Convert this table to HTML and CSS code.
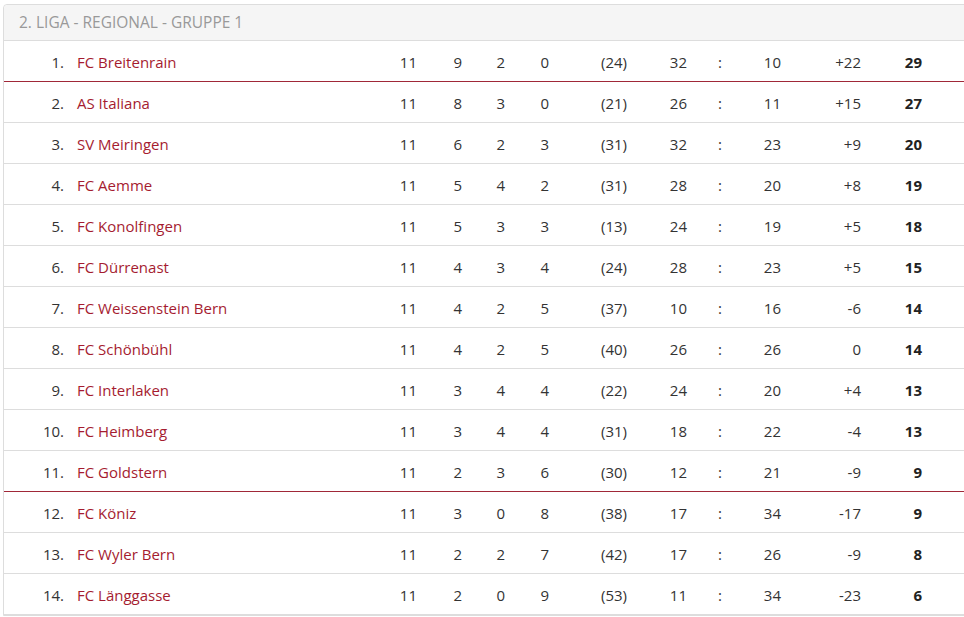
FILE: index.html
```html
<!DOCTYPE html>
<html lang="de">
<head>
<meta charset="utf-8">
<title>2. Liga - Regional - Gruppe 1</title>
<link rel="stylesheet" href="styles.css">
</head>
<body>
<div class="panel">
  <div class="panel-heading">2. Liga - Regional - Gruppe 1</div>
  <div class="table">
    <div class="row promo"><span class="rank">1.</span><a class="team">FC Breitenrain</a><span>11</span><span>9</span><span>2</span><span>0</span><span>(24)</span><span>32</span><span>:</span><span>10</span><span>+22</span><b>29</b></div>
    <div class="row"><span class="rank">2.</span><a class="team">AS Italiana</a><span>11</span><span>8</span><span>3</span><span>0</span><span>(21)</span><span>26</span><span>:</span><span>11</span><span>+15</span><b>27</b></div>
    <div class="row"><span class="rank">3.</span><a class="team">SV Meiringen</a><span>11</span><span>6</span><span>2</span><span>3</span><span>(31)</span><span>32</span><span>:</span><span>23</span><span>+9</span><b>20</b></div>
    <div class="row"><span class="rank">4.</span><a class="team">FC Aemme</a><span>11</span><span>5</span><span>4</span><span>2</span><span>(31)</span><span>28</span><span>:</span><span>20</span><span>+8</span><b>19</b></div>
    <div class="row"><span class="rank">5.</span><a class="team">FC Konolfingen</a><span>11</span><span>5</span><span>3</span><span>3</span><span>(13)</span><span>24</span><span>:</span><span>19</span><span>+5</span><b>18</b></div>
    <div class="row"><span class="rank">6.</span><a class="team">FC Dürrenast</a><span>11</span><span>4</span><span>3</span><span>4</span><span>(24)</span><span>28</span><span>:</span><span>23</span><span>+5</span><b>15</b></div>
    <div class="row"><span class="rank">7.</span><a class="team">FC Weissenstein Bern</a><span>11</span><span>4</span><span>2</span><span>5</span><span>(37)</span><span>10</span><span>:</span><span>16</span><span>-6</span><b>14</b></div>
    <div class="row"><span class="rank">8.</span><a class="team">FC Schönbühl</a><span>11</span><span>4</span><span>2</span><span>5</span><span>(40)</span><span>26</span><span>:</span><span>26</span><span>0</span><b>14</b></div>
    <div class="row"><span class="rank">9.</span><a class="team">FC Interlaken</a><span>11</span><span>3</span><span>4</span><span>4</span><span>(22)</span><span>24</span><span>:</span><span>20</span><span>+4</span><b>13</b></div>
    <div class="row"><span class="rank">10.</span><a class="team">FC Heimberg</a><span>11</span><span>3</span><span>4</span><span>4</span><span>(31)</span><span>18</span><span>:</span><span>22</span><span>-4</span><b>13</b></div>
    <div class="row releg"><span class="rank">11.</span><a class="team">FC Goldstern</a><span>11</span><span>2</span><span>3</span><span>6</span><span>(30)</span><span>12</span><span>:</span><span>21</span><span>-9</span><b>9</b></div>
    <div class="row"><span class="rank">12.</span><a class="team">FC Köniz</a><span>11</span><span>3</span><span>0</span><span>8</span><span>(38)</span><span>17</span><span>:</span><span>34</span><span>-17</span><b>9</b></div>
    <div class="row"><span class="rank">13.</span><a class="team">FC Wyler Bern</a><span>11</span><span>2</span><span>2</span><span>7</span><span>(42)</span><span>17</span><span>:</span><span>26</span><span>-9</span><b>8</b></div>
    <div class="row"><span class="rank">14.</span><a class="team">FC Länggasse</a><span>11</span><span>2</span><span>0</span><span>9</span><span>(53)</span><span>11</span><span>:</span><span>34</span><span>-23</span><b>6</b></div>
  </div>
</div>
</body>
</html>
```
FILE: styles.css
```css
html, body {
  margin: 0;
  padding: 0;
  background: #fff;
  overflow: hidden;
}
body {
  font-family: "Open Sans", "Noto Sans", sans-serif;
  font-size: 15px;
  color: #333;
}
.panel {
  margin: 4px 0 0 3px;
  width: 990px;
  border: 1px solid #ddd;
  border-radius: 4px 0 0 0;
}
.panel-heading {
  height: 35px;
  line-height: 35px;
  padding-left: 15px;
  background: #f5f5f5;
  border-bottom: 1px solid #ddd;
  color: #999;
  font-size: 15.5px;
  text-transform: uppercase;
  border-radius: 4px 0 0 0;
}
.row {
  display: grid;
  grid-template-columns: 60px 316px 37px 45px 43px 44px 78px 60px 35px 59px 80px 61px 1fr;
  box-sizing: border-box;
  height: 41px;
  padding-top: 2px;
  align-items: center;
  border-bottom: 1px solid #ddd;
  text-align: right;
}
.row.promo, .row.releg {
  border-bottom-color: #a02838;
}
.row .team {
  text-align: left;
  padding-left: 13px;
  color: #a51c30;
  text-decoration: none;
}
.row b {
  font-weight: 700;
  color: #222;
}
```
